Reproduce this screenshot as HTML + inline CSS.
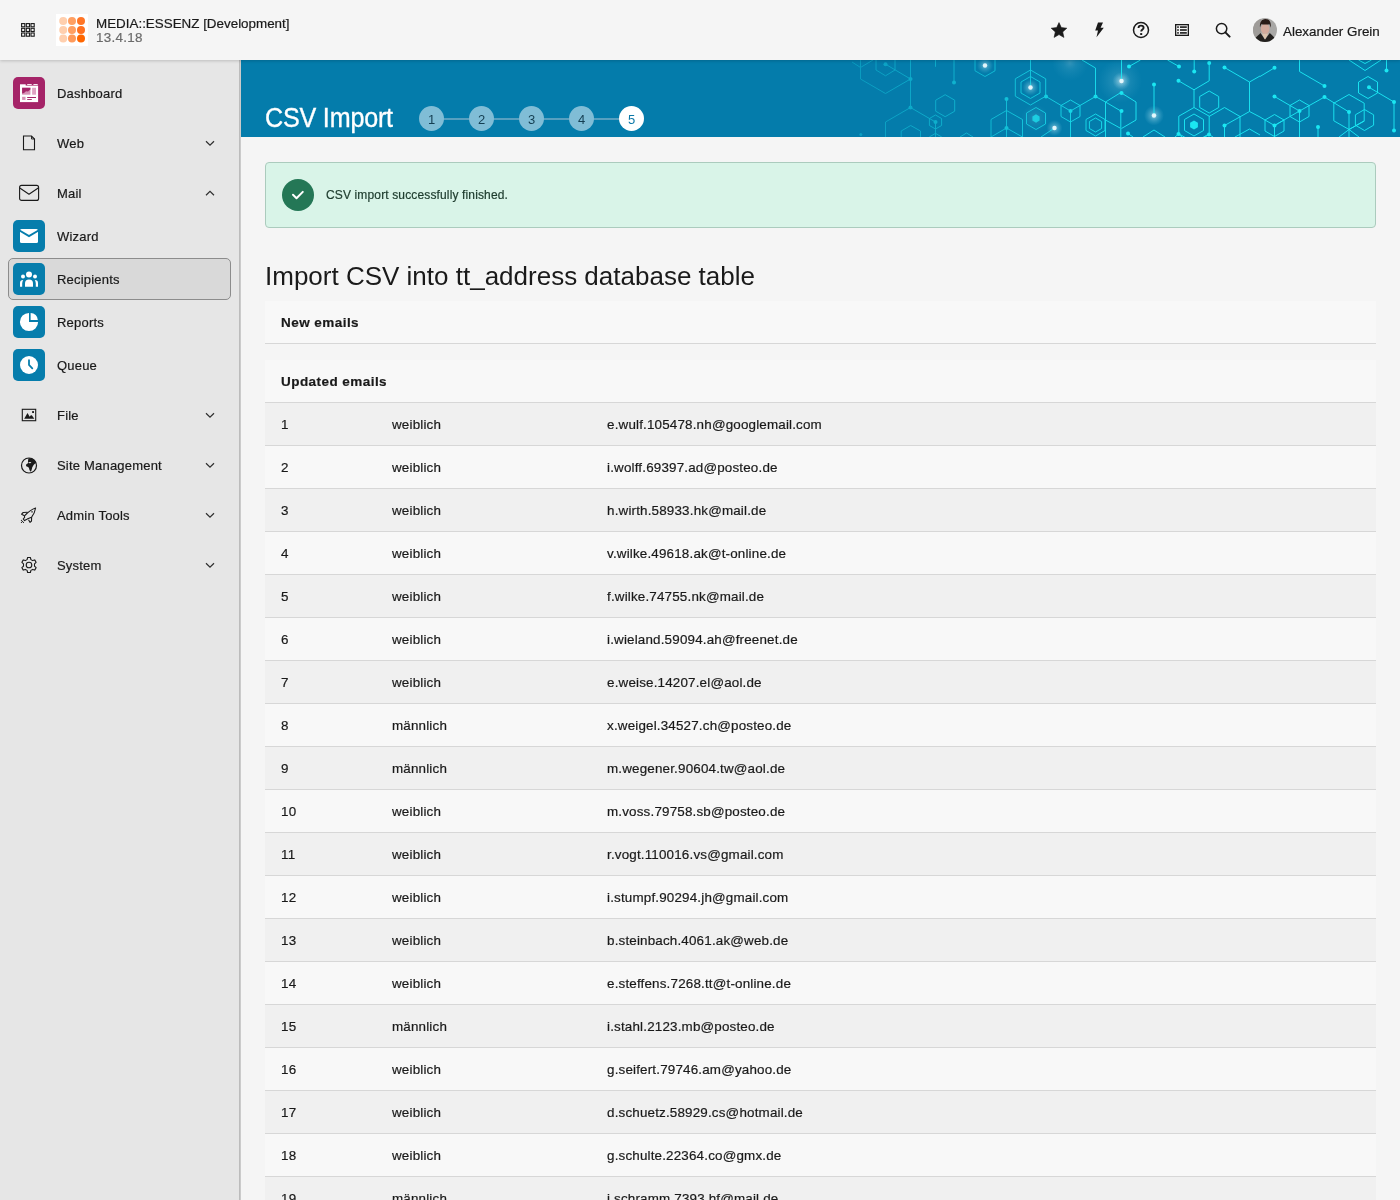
<!DOCTYPE html>
<html><head><meta charset="utf-8">
<style>
*{box-sizing:border-box;margin:0;padding:0}
body>div{will-change:transform}
.row,.hrow,.lbl,#alert .txt,.ti{-webkit-text-stroke:0.2px currentColor}
html,body{width:1400px;height:1200px;overflow:hidden;background:#f5f5f5;font-family:"Liberation Sans",sans-serif;color:#1a1a1a}
#top{position:absolute;left:0;top:0;width:1400px;height:60px;background:#f5f5f5;z-index:3;box-shadow:0 1px 3px rgba(0,0,0,.18)}
#side{position:absolute;left:0;top:60px;width:241px;height:1140px;background:#e6e6e6;border-right:1px solid #cbcbcb;z-index:2}
#side:after{content:"";position:absolute;left:239px;top:0;width:1px;height:1140px;background:#bcbcbc}
#main{position:absolute;left:241px;top:60px;width:1159px;height:1140px;background:#f5f5f5}
.ti{position:absolute}
.mi{position:absolute;left:0;width:240px;height:42px}
.mi .lbl{position:absolute;left:57px;top:1px;line-height:42px;font-size:13px;letter-spacing:0.2px;color:#1a1a1a}
.mi .ic{position:absolute;left:13px;top:5px;width:32px;height:32px;border-radius:5px}
.mi .chev{position:absolute;left:204px;top:17px}
#banner{position:absolute;left:0;top:0;width:1159px;height:77px;background:#047cab;overflow:hidden}
#banner h2{position:absolute;left:24px;top:43px;-webkit-text-stroke:0.35px #fff;font-size:27px;font-weight:normal;color:#fff;letter-spacing:-0.2px;line-height:30px;transform:scaleX(.93);transform-origin:0 0}
.step{position:absolute;top:46px;width:25px;height:25px;border-radius:50%;background:#80bdd6;color:#143e51;font-size:13px;line-height:27px;text-align:center}
.sline{position:absolute;top:58px;height:2px;background:#57a0c0}
#alert{position:absolute;left:24px;top:102px;width:1111px;height:66px;background:#d9f4e8;border:1px solid #abcbbd;border-radius:4px}
#alert .ok{position:absolute;left:16px;top:16px;width:32px;height:32px;border-radius:50%;background:#247756}
#alert .txt{position:absolute;left:60px;top:0;line-height:64px;font-size:12px;letter-spacing:0.14px;color:#1d3b2d}
h1{position:absolute;left:24px;top:196px;font-size:26px;font-weight:normal;line-height:40px;color:#1a1a1a}
#tbl{position:absolute;left:24px;top:241px;width:1111px}
.hrow{height:43px;background:#f8f8f8;border-bottom:1px solid #d7d7d7;font-weight:bold;font-size:13.5px;letter-spacing:0.45px;line-height:44px;padding-left:16px;color:#1a1a1a}
.gap{height:16px}
.row{position:relative;height:43px;border-bottom:1px solid #d7d7d7;font-size:13.4px;letter-spacing:0.18px;line-height:42px;color:#1a1a1a}
.row:nth-child(odd){background:#f0f0f0}
.row:nth-child(even){background:#f8f8f8}
.row span{position:absolute;top:1px}
.c1{left:16px}.c2{left:127px}.c3{left:342px}
</style></head><body>
<div id="top">
  <svg class="ti" style="left:21px;top:23px" width="14" height="14" viewBox="0 0 14 14"><g fill="none" stroke="#1a1a1a" stroke-width="1.1"><rect x="0.60" y="0.60" width="3.2" height="3.2"/><rect x="5.30" y="0.60" width="3.2" height="3.2"/><rect x="10.00" y="0.60" width="3.2" height="3.2"/><rect x="0.60" y="5.30" width="3.2" height="3.2"/><rect x="5.30" y="5.30" width="3.2" height="3.2"/><rect x="10.00" y="5.30" width="3.2" height="3.2"/><rect x="0.60" y="10.00" width="3.2" height="3.2"/><rect x="5.30" y="10.00" width="3.2" height="3.2"/><rect x="10.00" y="10.00" width="3.2" height="3.2"/></g></svg>
  <svg class="ti" style="left:56px;top:14px" width="32" height="32" viewBox="0 0 32 32">
    <rect width="32" height="32" fill="#fff"/>
    <circle cx="7.2" cy="7.1" r="4" fill="#ffcfae"/><circle cx="16" cy="7.1" r="4" fill="#ff9f62"/><circle cx="25" cy="7.1" r="4" fill="#ff7526"/>
    <circle cx="7.2" cy="16" r="4" fill="#ffcfae"/><circle cx="16" cy="16" r="4" fill="#ff9f62"/><circle cx="25" cy="16" r="4" fill="#ff7020"/>
    <circle cx="7.2" cy="24.6" r="4" fill="#ffcfae"/><circle cx="16" cy="24.6" r="4" fill="#ff9a5a"/><circle cx="25" cy="24.6" r="4" fill="#ff6600"/>
  </svg>
  <div class="ti" style="left:96px;top:16px;font-size:13.4px;line-height:16px;color:#1a1a1a">MEDIA::ESSENZ [Development]</div>
  <div class="ti" style="left:96px;top:30px;letter-spacing:0.3px;font-size:13.4px;line-height:16px;color:#6b6b6b">13.4.18</div>
  <svg class="ti" style="left:1050px;top:22px" width="18" height="17" viewBox="0 0 18 17"><path d="M9 0.6 L11.3 5.6 L16.8 6.2 L12.7 9.9 L13.9 15.4 L9 12.6 L4.1 15.4 L5.3 9.9 L1.2 6.2 L6.7 5.6 Z" fill="#1a1a1a" stroke="#1a1a1a" stroke-width="0.6" stroke-linejoin="round"/></svg>
  <svg class="ti" style="left:1093px;top:22px" width="12" height="16" viewBox="0 0 12 16"><path d="M5 0.5 H10 L7.6 5.8 H10.8 L3.5 15.2 L5 8.6 H2.2 Z" fill="#1a1a1a"/></svg>
  <svg class="ti" style="left:1132px;top:21px" width="18" height="18" viewBox="0 0 18 18"><circle cx="9" cy="9" r="7.5" fill="none" stroke="#1a1a1a" stroke-width="1.5"/><path d="M6.5 7 C6.5 5.3 7.6 4.6 9 4.6 C10.5 4.6 11.6 5.5 11.6 6.8 C11.6 8.5 9.2 8.7 9.2 10.6" fill="none" stroke="#1a1a1a" stroke-width="1.9"/><rect x="8.2" y="12.1" width="2" height="1.9" fill="#1a1a1a"/></svg>
  <svg class="ti" style="left:1175px;top:24px" width="14" height="12" viewBox="0 0 14 12"><rect x="0.65" y="0.65" width="12.7" height="10.7" fill="none" stroke="#1a1a1a" stroke-width="1.3"/><g fill="#1a1a1a"><rect x="2.2" y="2.3" width="1.6" height="1.6"/><rect x="2.2" y="5.2" width="1.6" height="1.6"/><rect x="2.2" y="8.1" width="1.6" height="1.6"/><rect x="5" y="2.3" width="6.8" height="1.6"/><rect x="5" y="5.2" width="6.8" height="1.6"/><rect x="5" y="8.1" width="6.8" height="1.6"/></g></svg>
  <svg class="ti" style="left:1215px;top:22px" width="16" height="16" viewBox="0 0 16 16"><circle cx="6.6" cy="6.6" r="5.2" fill="none" stroke="#1a1a1a" stroke-width="1.5"/><path d="M10.4 10.4 L14.6 14.6" stroke="#1a1a1a" stroke-width="2" stroke-linecap="round"/></svg>
  <svg class="ti" style="left:1253px;top:18px" width="24" height="24" viewBox="0 0 24 24"><defs><clipPath id="av"><circle cx="12" cy="12" r="12"/></clipPath></defs><g clip-path="url(#av)"><rect width="24" height="24" fill="#a9a8a6"/><rect width="8" height="24" fill="#9f9c99"/>
<ellipse cx="12.2" cy="10.8" rx="4.3" ry="5.2" fill="#d3aa9c"/>
<path d="M7 9.5 C6.5 4.5 8.5 1 12.5 1 C16.5 1 18.3 4 17.8 9.8 C17.2 8 16.8 6.8 16.5 6.2 C14 6.8 10.5 6.5 8.2 6.2 C7.8 7.2 7.4 8.3 7 9.5 Z" fill="#2a1c17"/>
<path d="M0 24 L2.5 19.8 C4.5 18 6 16.5 7.5 15 L12 21.5 L16.8 15 C18.3 16.5 20 18 21.5 19.8 L24 24 Z" fill="#23201e"/>
<path d="M8.6 15.3 C10 16 14 16 15.5 15.3 L12 21.5 Z" fill="#dcc3ad"/></g></svg>
  <div class="ti" style="left:1283px;top:24px;font-size:13.4px;line-height:16px;color:#1a1a1a">Alexander Grein</div>
</div>
<div id="side">
  <div class="mi" style="top:12px"><div class="ic" style="background:#a52468"><svg width="32" height="32" viewBox="0 0 32 32">
<rect x="7" y="8.6" width="18.1" height="16.5" fill="#fff"/><rect x="7" y="7.3" width="5.7" height="2" fill="#fff"/>
<rect x="14.2" y="7" width="4.5" height="0.9" fill="#fff"/><rect x="20.4" y="7" width="4.3" height="0.9" fill="#fff"/>
<rect x="9.1" y="10.8" width="8.3" height="6.9" fill="#d690b5"/><path d="M9.1 10.8 H17.4 V12.5 L15 14.6 L13 14.2 L11 16 L9.1 16.6 Z" fill="#a52468"/>
<rect x="19.1" y="10.8" width="3.9" height="6.9" fill="#dfa3c3"/>
<rect x="9.1" y="19.8" width="3.4" height="3.1" fill="#d690b5"/><rect x="14.2" y="20" width="8.8" height="1" fill="#a52468"/><rect x="14.2" y="22" width="4.6" height="0.9" fill="#a52468"/></svg></div><div class="lbl">Dashboard</div></div>
  <div class="mi" style="top:62px">
    <svg class="ti" style="left:22px;top:13px" width="14" height="16" viewBox="0 0 14 16"><path d="M1.5 1 H9.5 L12.5 4 V14.8 H1.5 Z" fill="none" stroke="#1a1a1a" stroke-width="1.1"/><path d="M9.5 1 V4 H12.5" fill="none" stroke="#1a1a1a" stroke-width="0.9"/></svg>
    <div class="lbl">Web</div><svg class="chev" width="12" height="8" viewBox="0 0 12 8"><path d="M2 2.3 L6 6.2 L10 2.3" fill="none" stroke="#2e2e2e" stroke-width="1.2"/></svg></div>
  <div class="mi" style="top:112px">
    <svg class="ti" style="left:18px;top:12px" width="22" height="18" viewBox="0 0 22 18"><rect x="1.6" y="1.4" width="19" height="15" rx="2" fill="none" stroke="#1a1a1a" stroke-width="1.1"/><path d="M1.8 4 L11 10.2 L20.2 4" fill="none" stroke="#1a1a1a" stroke-width="1.1" stroke-linejoin="round"/></svg>
    <div class="lbl">Mail</div><svg class="chev" width="12" height="8" viewBox="0 0 12 8"><path d="M2 6.3 L6 2.4 L10 6.3" fill="none" stroke="#2e2e2e" stroke-width="1.2"/></svg></div>
  <div class="mi" style="top:155px"><div class="ic" style="background:#067dac">
    <svg width="32" height="32" viewBox="0 0 32 32"><rect x="7" y="9" width="18" height="14" rx="1.5" fill="#fff"/><path d="M6.5 10.5 L16 16 L25.5 10.5" fill="none" stroke="#067dac" stroke-width="2"/></svg></div><div class="lbl">Wizard</div></div>
  <div style="position:absolute;left:8px;top:198px;width:223px;height:42px;background:#d9d9d9;border:1px solid #8c8c8c;border-radius:5px"></div>
  <div class="mi" style="top:198px"><div class="ic" style="background:#067dac">
    <svg width="32" height="32" viewBox="0 0 32 32"><circle cx="16" cy="11.5" r="3" fill="#fff"/><circle cx="10" cy="13.5" r="2" fill="#fff"/><circle cx="22" cy="13.5" r="2" fill="#fff"/><path d="M12 23.8 V20.6 A4 4 0 0 1 20 20.6 V23.8 Z" fill="#fff"/><path d="M7 23.8 V20.3 A3.2 3.2 0 0 1 10.2 17 C9.6 18 9.2 19.2 9.2 20.6 V23.8 Z" fill="#fff"/><path d="M25 23.8 V20.3 A3.2 3.2 0 0 0 21.8 17 C22.4 18 22.8 19.2 22.8 20.6 V23.8 Z" fill="#fff"/></svg></div><div class="lbl">Recipients</div></div>
  <div class="mi" style="top:241px"><div class="ic" style="background:#067dac">
    <svg width="32" height="32" viewBox="0 0 32 32"><path d="M16 6.9 A9.1 9.1 0 1 0 25.1 16 H16 Z" fill="#fff"/><path d="M17.6 6.9 A7.2 7.2 0 0 1 24.8 14.1 H17.6 Z" fill="#fff"/></svg></div><div class="lbl">Reports</div></div>
  <div class="mi" style="top:284px"><div class="ic" style="background:#067dac">
    <svg width="32" height="32" viewBox="0 0 32 32"><circle cx="16" cy="16" r="9" fill="#fff"/><path d="M16 11.2 V16 L19.3 19.3" fill="none" stroke="#067dac" stroke-width="1.8" stroke-linecap="round"/></svg></div><div class="lbl">Queue</div></div>
  <div class="mi" style="top:334px">
    <svg class="ti" style="left:21px;top:14px" width="16" height="14" viewBox="0 0 16 14"><rect x="1.3" y="1.3" width="13.4" height="11.4" fill="none" stroke="#1a1a1a" stroke-width="1.1"/><path d="M3.2 10.7 L6.5 5 L8.7 8.8 L9.6 7.5 C10 7 10.6 7 11 7.5 L13.3 10.7 Z" fill="#1a1a1a"/><rect x="11.1" y="3.1" width="1.9" height="1.9" rx=".5" fill="#1a1a1a"/></svg>
    <div class="lbl">File</div><svg class="chev" width="12" height="8" viewBox="0 0 12 8"><path d="M2 2.3 L6 6.2 L10 2.3" fill="none" stroke="#2e2e2e" stroke-width="1.2"/></svg></div>
  <div class="mi" style="top:384px">
    <svg class="ti" style="left:20px;top:12px" width="18" height="18" viewBox="0 0 18 18"><circle cx="9" cy="9.5" r="7.5" fill="none" stroke="#1a1a1a" stroke-width="1.2"/><path d="M8.4 2.4 C11 1.6 14.5 3 16.3 7 C15 7.5 14.5 8 14 8.6 C13 10 12.3 11 12 12.5 C11.7 13.8 11.3 14.8 11 15.8 C10 15 9.3 14 9.1 12.5 C9 11.5 8 10.8 6.6 10.5 C6 10 5.9 9 6.2 8.6 C6.8 7.8 8 7.6 8 6.5 C8 5 8 3.5 8.4 2.4 Z" fill="#1a1a1a"/><ellipse cx="9.8" cy="6.6" rx="1.5" ry="0.6" fill="#e6e6e6"/></svg>
    <div class="lbl">Site Management</div><svg class="chev" width="12" height="8" viewBox="0 0 12 8"><path d="M2 2.3 L6 6.2 L10 2.3" fill="none" stroke="#2e2e2e" stroke-width="1.2"/></svg></div>
  <div class="mi" style="top:434px">
    <svg class="ti" style="left:20px;top:12px" width="18" height="18" viewBox="0 0 18 18"><g fill="none" stroke="#1a1a1a" stroke-width="1.1" stroke-linejoin="round"><path d="M15.6 2 C12.5 3 9 5 4.5 9.8 L4.6 11.4 L3.2 13 L4.6 14.6 L6.4 13.6 C8 12.5 10 12 11.6 11.2 C13.6 8.6 15 5.8 15.6 2 Z"/><path d="M7.6 6.3 L3.2 6.5 L1.6 8.2 L4.5 9.8"/><path d="M11.6 11.2 L11.5 15 L10 16.3 L8.5 13.7"/></g><rect x="11.4" y="5.2" width="1.3" height="1.3" fill="#1a1a1a"/><g fill="#1a1a1a"><circle cx="1.4" cy="14.4" r=".55"/><circle cx="2.4" cy="15.4" r=".55"/><circle cx="1.4" cy="16.4" r=".55"/><circle cx="3.4" cy="16.4" r=".55"/></g></svg>
    <div class="lbl">Admin Tools</div><svg class="chev" width="12" height="8" viewBox="0 0 12 8"><path d="M2 2.3 L6 6.2 L10 2.3" fill="none" stroke="#2e2e2e" stroke-width="1.2"/></svg></div>
  <div class="mi" style="top:484px">
    <svg class="ti" style="left:20px;top:12px" width="18" height="18" viewBox="0 0 18 18"><path d="M7.6 1.5 H10.4 L10.9 3.6 L12.6 4.6 L14.7 3.9 L16.1 6.3 L14.5 7.8 V10.2 L16.1 11.7 L14.7 14.1 L12.6 13.4 L10.9 14.4 L10.4 16.5 H7.6 L7.1 14.4 L5.4 13.4 L3.3 14.1 L1.9 11.7 L3.5 10.2 V7.8 L1.9 6.3 L3.3 3.9 L5.4 4.6 L7.1 3.6 Z" fill="none" stroke="#1a1a1a" stroke-width="1.1" stroke-linejoin="round"/><circle cx="9" cy="9" r="2.8" fill="none" stroke="#1a1a1a" stroke-width="1.1"/></svg>
    <div class="lbl">System</div><svg class="chev" width="12" height="8" viewBox="0 0 12 8"><path d="M2 2.3 L6 6.2 L10 2.3" fill="none" stroke="#2e2e2e" stroke-width="1.2"/></svg></div>
</div>
<div id="main">
  <div id="banner"><!--BANNER--><svg style="position:absolute;left:0;top:0" width="1159" height="77" viewBox="241 60 1159 77">
<defs><radialGradient id="gl"><stop offset="0" stop-color="#ffffff" stop-opacity="1"/><stop offset="0.35" stop-color="#bfeaf5" stop-opacity=".55"/><stop offset="1" stop-color="#7fd0e8" stop-opacity="0"/></radialGradient>
<linearGradient id="fd" gradientUnits="userSpaceOnUse" x1="850" y1="0" x2="1130" y2="0"><stop offset="0" stop-color="#fff" stop-opacity=".3"/><stop offset=".45" stop-color="#fff" stop-opacity=".55"/><stop offset="1" stop-color="#fff" stop-opacity="1"/></linearGradient>
<mask id="mk" maskUnits="userSpaceOnUse" x="241" y="60" width="1159" height="77"><rect x="241" y="60" width="1159" height="77" fill="url(#fd)"/></mask></defs>
<circle cx="985.0" cy="65.5" r="8.0" fill="url(#gl)" opacity="0.55"/><circle cx="1030.5" cy="87.5" r="8.0" fill="url(#gl)" opacity="0.60"/><circle cx="1054.5" cy="128.0" r="8.0" fill="url(#gl)" opacity="0.60"/><circle cx="1121.5" cy="81.0" r="9.0" fill="url(#gl)" opacity="0.65"/><circle cx="1154.0" cy="115.5" r="10.0" fill="url(#gl)" opacity="0.65"/><circle cx="1120.0" cy="81.0" r="22.0" fill="url(#gl)" opacity="0.25"/><circle cx="1070.0" cy="63.0" r="18.0" fill="url(#gl)" opacity="0.18"/><circle cx="1035.0" cy="118.0" r="14.0" fill="url(#gl)" opacity="0.15"/><g mask="url(#mk)"><g fill="none" stroke="#1be7f2" stroke-width="0.95"><polyline points="873.0,60.0 860.5,67.5 860.5,79.0 885.5,93.5 910.5,79.0"/><polyline points="852.0,62.0 860.5,67.5 860.5,60.0"/><polyline points="876.0,60.0 876.0,70.0 885.5,75.8 895.0,70.0 895.0,60.0"/><polyline points="885.5,64.2 910.5,79.0"/><polyline points="910.5,60.0 910.5,107.5"/><polyline points="885.5,137.0 885.5,122.0 910.5,107.5 935.5,122.0 935.5,137.0"/><polygon points="935.5,115.0 941.6,118.5 941.6,125.5 935.5,129.0 929.4,125.5 929.4,118.5"/><polyline points="929.2,137.0 935.5,133.4 941.8,137.0"/><polygon points="945.2,94.7 954.7,100.2 954.7,111.2 945.2,116.7 935.7,111.2 935.7,100.2"/><polyline points="901.2,137.0 901.2,131.0 910.7,125.5 920.5,131.0 920.5,137.0"/><polyline points="935.5,60.0 935.5,66.8"/><polyline points="954.0,60.0 954.0,82.5"/><polyline points="960.0,137.0 966.5,133.0 973.0,137.0"/><polygon points="985.0,53.5 995.0,59.2 995.0,70.8 985.0,76.5 975.0,70.8 975.0,59.2"/><polygon points="1030.5,70.0 1045.7,78.8 1045.7,96.2 1030.5,105.0 1015.3,96.2 1015.3,78.8"/><polygon points="1030.5,76.5 1040.0,82.0 1040.0,93.0 1030.5,98.5 1021.0,93.0 1021.0,82.0"/><polyline points="1030.5,60.0 1030.5,87.5"/><polyline points="1046.0,96.5 1070.5,111.0"/><polygon points="1070.5,100.0 1080.0,105.5 1080.0,116.5 1070.5,122.0 1061.0,116.5 1061.0,105.5"/><polyline points="1070.5,111.0 1070.5,137.0"/><polyline points="1070.5,111.0 1095.5,96.5"/><polyline points="1082.0,60.0 1095.5,68.0 1095.5,96.5 1105.5,102.0"/><polyline points="1120.0,93.0 1105.5,102.0 1120.0,110.5"/><polyline points="1105.5,102.0 1105.5,137.0"/><polygon points="1095.5,114.0 1105.0,119.5 1105.0,130.5 1095.5,136.0 1086.0,130.5 1086.0,119.5"/><polygon points="1095.5,118.0 1101.6,121.5 1101.6,128.5 1095.5,132.0 1089.4,128.5 1089.4,121.5"/><polyline points="1105.5,120.0 1120.0,128.0"/><polygon points="1036.0,107.5 1045.5,113.0 1045.5,124.0 1036.0,129.5 1026.5,124.0 1026.5,113.0"/><polyline points="1006.5,99.0 1006.5,137.0"/><polyline points="991.0,137.0 991.0,119.5 1006.5,110.5 1022.5,119.5 1022.5,137.0"/><polyline points="991.0,137.0 1006.5,128.0 1022.5,137.0"/><polyline points="1054.5,128.0 1041.0,137.0"/><polyline points="1121.5,60.0 1121.5,81.0"/><polyline points="1129.0,66.5 1140.5,60.0"/><polyline points="1167.5,60.0 1179.0,66.5"/><polyline points="1194.2,60.0 1194.2,71.5"/><polyline points="1209.2,63.0 1209.2,80.8 1194.0,89.8 1178.5,80.8"/><polyline points="1194.0,89.8 1194.0,107.5"/><polygon points="1209.2,91.0 1218.7,96.5 1218.7,107.5 1209.2,113.0 1199.7,107.5 1199.7,96.5"/><polygon points="1194.0,107.5 1209.2,116.2 1209.2,133.8 1194.0,142.5 1178.8,133.8 1178.8,116.2"/><polygon points="1194.0,114.0 1203.5,119.5 1203.5,130.5 1194.0,136.0 1184.5,130.5 1184.5,119.5"/><polyline points="1175.0,137.0 1178.5,134.0 1182.0,137.0"/><polyline points="1205.0,137.0 1209.0,134.5 1213.0,137.0"/><polyline points="1209.0,116.5 1224.5,107.5 1240.0,116.5 1240.0,137.0"/><polyline points="1224.5,137.0 1224.5,125.5 1249.5,111.5 1260.0,117.0"/><polyline points="1249.5,82.0 1249.5,111.5"/><polyline points="1224.5,67.5 1249.5,82.0 1260.0,76.0"/><polyline points="1235.0,137.0 1249.5,129.0 1260.0,135.0"/><polyline points="1154.0,84.5 1154.0,115.5"/><polyline points="1121.5,93.0 1136.0,102.0 1136.0,120.0 1121.5,128.5"/><polyline points="1120.8,111.0 1120.8,137.0"/><polyline points="1128.0,133.5 1133.0,137.0"/><polyline points="1143.0,137.0 1154.0,130.0 1165.0,137.0"/><polyline points="1260.0,76.5 1274.5,67.8"/><polyline points="1299.5,60.0 1299.5,71.5 1324.5,86.0"/><polyline points="1274.5,96.5 1299.5,111.0"/><polygon points="1299.5,100.0 1309.0,105.5 1309.0,116.5 1299.5,122.0 1290.0,116.5 1290.0,105.5"/><polyline points="1299.5,111.0 1324.5,97.0 1349.0,112.0"/><polyline points="1299.5,111.0 1274.5,125.5"/><polyline points="1299.5,111.0 1299.5,137.0"/><polygon points="1274.5,114.5 1284.0,120.0 1284.0,131.0 1274.5,136.5 1265.0,131.0 1265.0,120.0"/><polyline points="1265.0,120.0 1274.5,125.5 1284.0,120.0"/><polyline points="1274.5,125.5 1274.5,137.0"/><polyline points="1260.0,117.0 1265.0,120.0"/><polygon points="1349.0,94.5 1364.2,103.2 1364.2,120.8 1349.0,129.5 1333.8,120.8 1333.8,103.2"/><polyline points="1349.0,112.0 1349.0,137.0"/><polygon points="1364.5,109.5 1373.6,114.8 1373.6,125.2 1364.5,130.5 1355.4,125.2 1355.4,114.8"/><polyline points="1339.0,137.0 1349.0,129.5 1359.0,137.0"/><polyline points="1349.0,129.5 1364.5,121.0"/><polyline points="1318.0,127.0 1318.0,137.0"/><polygon points="1368.0,76.5 1377.5,82.0 1377.5,93.0 1368.0,98.5 1358.5,93.0 1358.5,82.0"/><polyline points="1369.0,87.3 1394.0,102.0 1394.0,130.5"/><polyline points="1349.0,60.0 1365.0,70.5 1381.0,60.0"/><polyline points="1358.5,60.0 1365.0,63.5 1371.5,60.0"/><polyline points="1386.5,60.0 1386.5,70.5"/></g><g fill="#1be7f2" stroke="none"><circle cx="885.5" cy="64.2" r="2.0"/><circle cx="910.5" cy="79.0" r="2.0"/><circle cx="910.5" cy="107.5" r="2.0"/><circle cx="935.5" cy="122.0" r="2.0"/><circle cx="954.0" cy="82.5" r="2.0"/><circle cx="860.8" cy="134.5" r="1.5"/><circle cx="1046.0" cy="96.5" r="2.0"/><circle cx="1070.5" cy="111.0" r="2.0"/><circle cx="1095.5" cy="96.5" r="2.0"/><circle cx="1006.5" cy="99.0" r="2.0"/><circle cx="1006.5" cy="128.0" r="2.0"/><polygon points="1036.0,114.3 1039.6,116.4 1039.6,120.6 1036.0,122.7 1032.4,120.6 1032.4,116.4"/><circle cx="1129.0" cy="66.5" r="2.0"/><circle cx="1179.0" cy="66.5" r="2.0"/><circle cx="1194.2" cy="71.5" r="2.0"/><circle cx="1209.2" cy="63.0" r="2.0"/><circle cx="1178.5" cy="80.8" r="2.0"/><circle cx="1178.5" cy="134.0" r="2.0"/><circle cx="1209.0" cy="134.5" r="2.0"/><circle cx="1224.5" cy="125.5" r="2.0"/><circle cx="1224.5" cy="67.5" r="2.0"/><circle cx="1154.0" cy="84.5" r="2.0"/><circle cx="1121.5" cy="93.0" r="2.0"/><circle cx="1121.5" cy="111.0" r="2.0"/><circle cx="1128.0" cy="133.5" r="2.0"/><polygon points="1194.0,120.5 1197.9,122.8 1197.9,127.2 1194.0,129.5 1190.1,127.2 1190.1,122.8"/><circle cx="1274.5" cy="67.8" r="2.0"/><circle cx="1324.5" cy="86.0" r="2.0"/><circle cx="1274.5" cy="96.5" r="2.0"/><circle cx="1299.5" cy="111.0" r="2.0"/><circle cx="1324.5" cy="97.0" r="2.0"/><circle cx="1349.0" cy="112.0" r="2.0"/><circle cx="1274.5" cy="125.5" r="2.0"/><circle cx="1318.0" cy="127.0" r="2.0"/><circle cx="1369.0" cy="87.3" r="2.0"/><circle cx="1394.0" cy="102.0" r="2.0"/><circle cx="1394.0" cy="130.5" r="2.0"/><circle cx="1386.5" cy="70.5" r="2.0"/></g></g><circle cx="985.0" cy="65.5" r="2.2" fill="#eefcff" opacity=".9"/><circle cx="1030.5" cy="87.5" r="2.2" fill="#eefcff" opacity=".9"/><circle cx="1054.5" cy="128.0" r="2.2" fill="#eefcff" opacity=".9"/><circle cx="1121.5" cy="81.0" r="2.2" fill="#eefcff" opacity=".9"/><circle cx="1154.0" cy="115.5" r="2.2" fill="#eefcff" opacity=".9"/></svg><!--/BANNER-->
    <h2>CSV Import</h2>
    <div class="sline" style="left:190px;width:200px"></div>
    <div class="step" style="left:178px">1</div>
    <div class="step" style="left:228px">2</div>
    <div class="step" style="left:278px">3</div>
    <div class="step" style="left:328px">4</div>
    <div class="step" style="left:378px;background:#fff;color:#0b78a8">5</div>
  </div>
  <div id="alert"><div class="ok"><svg width="32" height="32" viewBox="0 0 32 32"><path d="M11 15.8 L14.5 19.2 L20.8 12.9" fill="none" stroke="#fff" stroke-width="2" stroke-linecap="round" stroke-linejoin="round"/></svg></div><div class="txt">CSV import successfully finished.</div></div>
  <h1>Import CSV into tt_address database table</h1>
  <div id="tbl">
    <div class="hrow">New emails</div>
    <div class="gap"></div>
    <div class="hrow">Updated emails</div>
    <div id="rows">
    <div class="row"><span class="c1">1</span><span class="c2">weiblich</span><span class="c3">e.wulf.105478.nh@googlemail.com</span></div>
    <div class="row"><span class="c1">2</span><span class="c2">weiblich</span><span class="c3">i.wolff.69397.ad@posteo.de</span></div>
    <div class="row"><span class="c1">3</span><span class="c2">weiblich</span><span class="c3">h.wirth.58933.hk@mail.de</span></div>
    <div class="row"><span class="c1">4</span><span class="c2">weiblich</span><span class="c3">v.wilke.49618.ak@t-online.de</span></div>
    <div class="row"><span class="c1">5</span><span class="c2">weiblich</span><span class="c3">f.wilke.74755.nk@mail.de</span></div>
    <div class="row"><span class="c1">6</span><span class="c2">weiblich</span><span class="c3">i.wieland.59094.ah@freenet.de</span></div>
    <div class="row"><span class="c1">7</span><span class="c2">weiblich</span><span class="c3">e.weise.14207.el@aol.de</span></div>
    <div class="row"><span class="c1">8</span><span class="c2">männlich</span><span class="c3">x.weigel.34527.ch@posteo.de</span></div>
    <div class="row"><span class="c1">9</span><span class="c2">männlich</span><span class="c3">m.wegener.90604.tw@aol.de</span></div>
    <div class="row"><span class="c1">10</span><span class="c2">weiblich</span><span class="c3">m.voss.79758.sb@posteo.de</span></div>
    <div class="row"><span class="c1">11</span><span class="c2">weiblich</span><span class="c3">r.vogt.110016.vs@gmail.com</span></div>
    <div class="row"><span class="c1">12</span><span class="c2">weiblich</span><span class="c3">i.stumpf.90294.jh@gmail.com</span></div>
    <div class="row"><span class="c1">13</span><span class="c2">weiblich</span><span class="c3">b.steinbach.4061.ak@web.de</span></div>
    <div class="row"><span class="c1">14</span><span class="c2">weiblich</span><span class="c3">e.steffens.7268.tt@t-online.de</span></div>
    <div class="row"><span class="c1">15</span><span class="c2">männlich</span><span class="c3">i.stahl.2123.mb@posteo.de</span></div>
    <div class="row"><span class="c1">16</span><span class="c2">weiblich</span><span class="c3">g.seifert.79746.am@yahoo.de</span></div>
    <div class="row"><span class="c1">17</span><span class="c2">weiblich</span><span class="c3">d.schuetz.58929.cs@hotmail.de</span></div>
    <div class="row"><span class="c1">18</span><span class="c2">weiblich</span><span class="c3">g.schulte.22364.co@gmx.de</span></div>
    <div class="row"><span class="c1">19</span><span class="c2">männlich</span><span class="c3">i.schramm.7393.hf@mail.de</span></div>
    <div class="row"><span class="c1">20</span><span class="c2">weiblich</span><span class="c3">a.schmitz.1234.xy@mail.de</span></div>
    </div>
  </div>
</div>
</body></html>
